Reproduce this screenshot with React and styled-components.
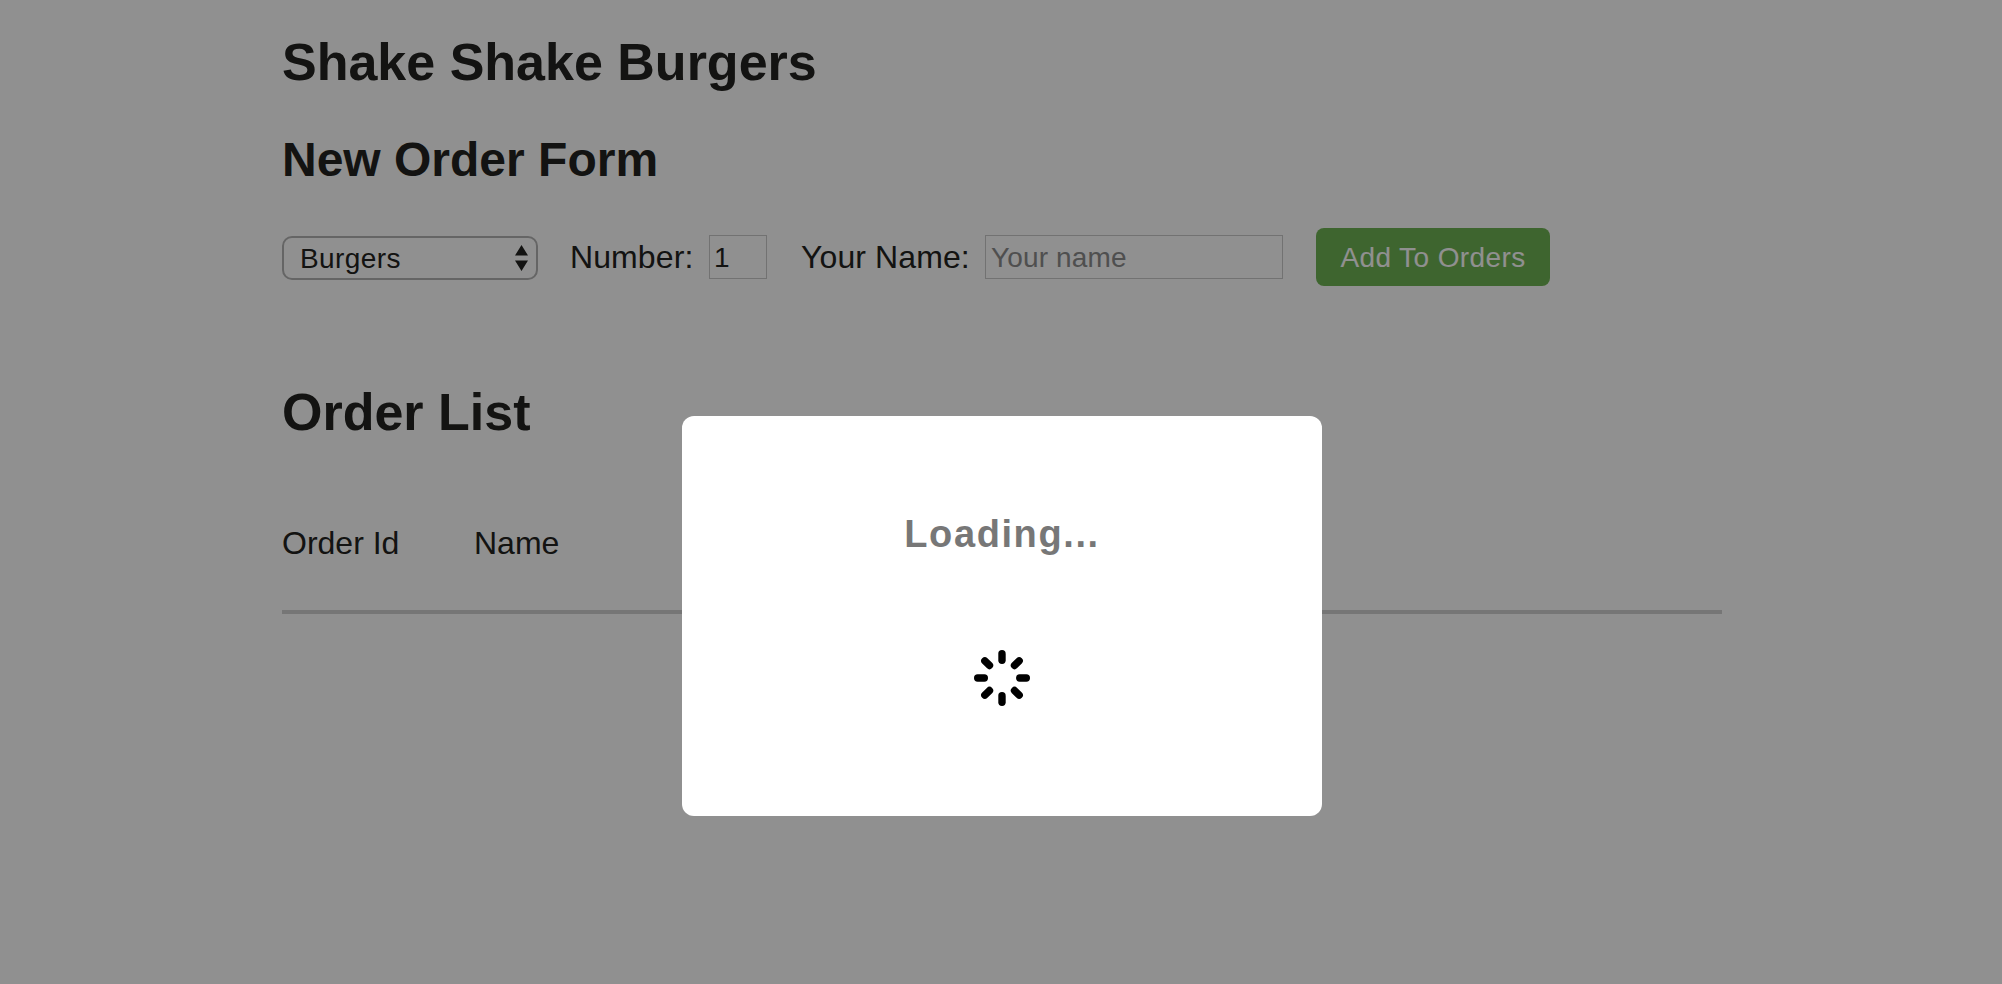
import React from "react";
import styled, { createGlobalStyle } from "styled-components";

const GlobalStyle = createGlobalStyle`
  *, *::before, *::after { box-sizing: border-box; }
  body {
    margin: 0;
    background: #fff;
    color: #232320;
    font-family: "Liberation Sans", Helvetica, Arial, sans-serif;
    font-size: 32px;
    line-height: 40px;
    overflow: hidden;
  }
`;

const Page = styled.main`
  width: 1440px;
  min-height: 984px;
  margin-left: 282px;
  padding-top: 32px;
`;

const Title = styled.h1`
  margin: 0;
  font-size: 52px;
  line-height: 60px;
`;

const FormTitle = styled.h2`
  margin: 40px 0;
  font-size: 48px;
  line-height: 56px;
`;

const ListTitle = styled(Title).attrs({ as: "h2" })`
  margin: 96px 0 81px;
`;

const OrderForm = styled.form`
  display: flex;
  align-items: center;
  height: 58px;
`;

const SelectBox = styled.div`
  position: relative;
  width: 256px;
  height: 44px;
  margin: 2px 32px 0 0;
`;

const Select = styled.select`
  appearance: none;
  display: block;
  width: 100%;
  height: 100%;
  padding: 0 36px 0 16px;
  border: 2px solid #b4b4b4;
  border-radius: 10px;
  background: #fff;
  color: #232320;
  font: 28px "Liberation Sans", sans-serif;
  letter-spacing: 0.4px;
`;

const SelectArrows = styled.svg`
  position: absolute;
  right: 10px;
  top: 9px;
  fill: #232320;
  pointer-events: none;
`;

const Field = styled.label`
  display: flex;
  align-items: center;
  justify-content: space-between;
  width: ${(p) => p.$width}px;
  margin-right: ${(p) => p.$after}px;
  letter-spacing: 0.1px;
  white-space: nowrap;
`;

const Input = styled.input`
  width: ${(p) => p.$width}px;
  height: 44px;
  padding: 2px ${(p) => p.$inset}px 0;
  border: 1px solid #cbcbcb;
  border-radius: 0;
  background: #fff;
  color: #232320;
  font: 28px "Liberation Sans", sans-serif;
  letter-spacing: 0.15px;
  outline: none;

  &::placeholder {
    color: #8d8d8d;
    opacity: 1;
  }
`;

const SubmitButton = styled.button`
  width: 234px;
  height: 58px;
  padding: 2px 0 0;
  border: 0;
  border-radius: 8px;
  background: #6fb453;
  color: #fff;
  font: 28px "Liberation Sans", sans-serif;
  letter-spacing: 0.4px;
`;

const ListHeader = styled.div`
  display: grid;
  grid-template-columns: 192px 1fr;
  padding-bottom: 47px;
  border-bottom: 4px solid #d2d2d2;
`;

const Overlay = styled.div`
  position: fixed;
  inset: 0;
  background: rgba(0, 0, 0, 0.436);
`;

const Dialog = styled.div`
  position: absolute;
  left: 682px;
  top: 416px;
  width: 640px;
  height: 400px;
  padding-top: 94px;
  display: flex;
  flex-direction: column;
  align-items: center;
  gap: 92px;
  border-radius: 12px;
  background: #fff;
`;

const LoadingText = styled.strong`
  color: #777;
  font-size: 38px;
  line-height: 48px;
  letter-spacing: 1.6px;
`;

const Spinner = styled.svg`
  stroke: #000;
  stroke-width: 7.4;
  stroke-linecap: round;
`;

const spokes = [0, 45, 90, 135, 180, 225, 270, 315];

export default function App() {
  return (
    <>
      <GlobalStyle />
      <Page>
        <Title>Shake Shake Burgers</Title>
        <FormTitle>New Order Form</FormTitle>
        <OrderForm>
          <SelectBox>
            <Select defaultValue="Burgers" aria-label="Burger">
              <option>Burgers</option>
            </Select>
            <SelectArrows width="13" height="26" viewBox="0 0 13 26">
              <path d="M6.5 0 L13 10.5 H0 Z M0 15.5 H13 L6.5 26 Z" />
            </SelectArrows>
          </SelectBox>
          <Field $width={197} $after={34}>
            Number:
            <Input $width={58} $inset={4} defaultValue="1" />
          </Field>
          <Field $width={482} $after={33}>
            Your Name:
            <Input $width={298} $inset={5} placeholder="Your name" />
          </Field>
          <SubmitButton type="button">Add To Orders</SubmitButton>
        </OrderForm>
        <ListTitle>Order List</ListTitle>
        <ListHeader>
          <span>Order Id</span>
          <span>Name</span>
        </ListHeader>
      </Page>
      <Overlay>
        <Dialog role="dialog" aria-label="Loading">
          <LoadingText>Loading...</LoadingText>
          <Spinner width="56" height="56" viewBox="-28 -28 56 56">
            {spokes.map((angle) => (
              <line key={angle} y1="-24.3" y2="-17.7" transform={`rotate(${angle})`} />
            ))}
          </Spinner>
        </Dialog>
      </Overlay>
    </>
  );
}
